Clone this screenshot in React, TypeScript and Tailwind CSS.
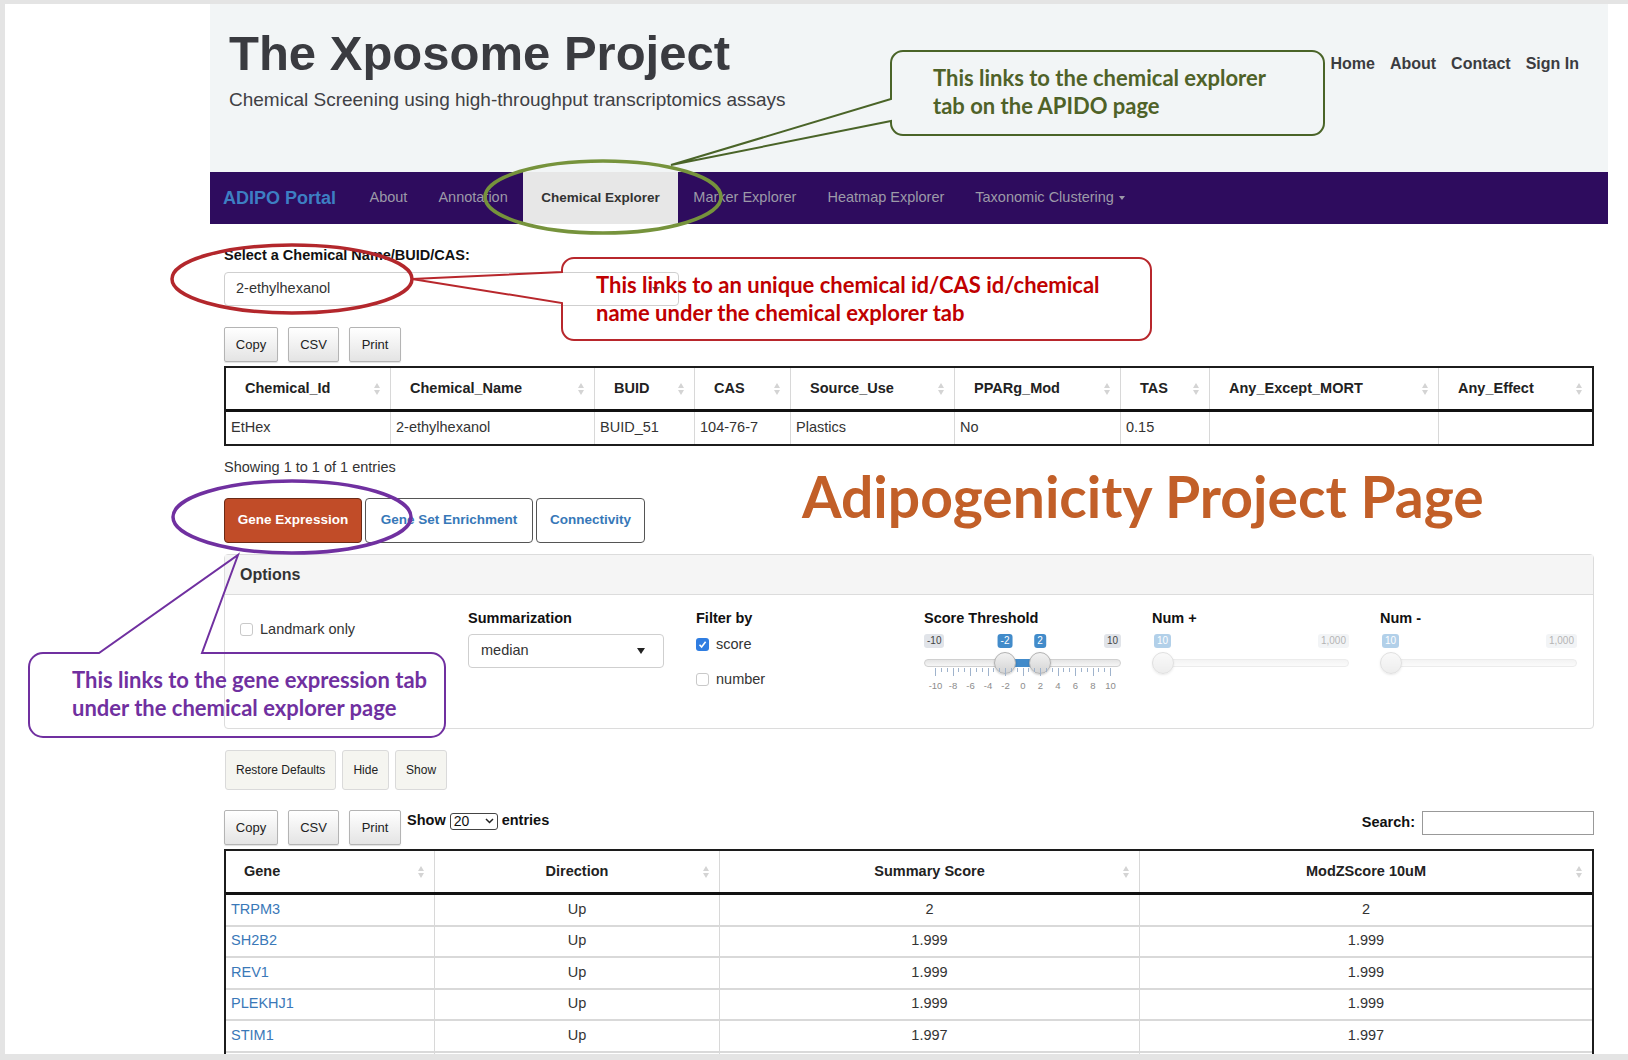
import React from "react";

const chemCols = [
  { name: "Chemical_Id", w: "EtHex" },
  { name: "Chemical_Name", w: "2-ethylhexanol" },
  { name: "BUID", w: "BUID_51" },
  { name: "CAS", w: "104-76-7" },
  { name: "Source_Use", w: "Plastics" },
  { name: "PPARg_Mod", w: "No" },
  { name: "TAS", w: "0.15" },
  { name: "Any_Except_MORT", w: "" },
  { name: "Any_Effect", w: "" },
];

const genes = [
  ["TRPM3", "Up", "2", "2"],
  ["SH2B2", "Up", "1.999", "1.999"],
  ["REV1", "Up", "1.999", "1.999"],
  ["PLEKHJ1", "Up", "1.999", "1.999"],
  ["STIM1", "Up", "1.997", "1.997"],
  ["", "", "", ""],
];

function SortIcon() {
  return (
    <span className="flex w-[8px] shrink-0 flex-col items-center gap-[2px]">
      <span className="h-0 w-0 border-x-[3.5px] border-b-[5px] border-x-transparent border-b-[#d4d4d4]" />
      <span className="h-0 w-0 border-x-[3.5px] border-t-[5px] border-x-transparent border-t-[#d4d4d4]" />
    </span>
  );
}

function GrayButton({ label, w }: { label: string; w: string }) {
  return (
    <button
      className={`flex h-[35px] ${w} items-center justify-center rounded-[2px] border border-[#b4b4b4] bg-gradient-to-b from-white to-[#e4e4e4] text-[13px] text-[#222] shadow-[0_1px_1px_rgba(0,0,0,0.12)]`}
    >
      {label}
    </button>
  );
}

function Checkbox({ checked }: { checked?: boolean }) {
  if (checked) {
    return (
      <span className="flex h-[13px] w-[13px] items-center justify-center rounded-[3px] bg-[#2f7de1]">
        <svg width="9" height="9" viewBox="0 0 9 9">
          <path d="M1.5 4.8 L3.6 7 L7.6 1.8" stroke="white" strokeWidth="1.6" fill="none" />
        </svg>
      </span>
    );
  }
  return <span className="h-[13px] w-[13px] rounded-[3px] border border-[#c9c9c9] bg-white" />;
}

function RangeSlider({
  min,
  max,
  from,
  to,
  grid,
  faded,
}: {
  min: string;
  max: string;
  from: number;
  to?: number;
  grid?: boolean;
  faded?: boolean;
}) {
  // handle positions in px within the 197px wide widget
  const toX = (v: number) => 11 + ((v + 10) / 20) * 175;
  const fromX = faded ? 11 : toX(from);
  const toXPos = to !== undefined ? toX(to) : null;
  const ticks = [-10, -8, -6, -4, -2, 0, 2, 4, 6, 8, 10];

  return (
    <div className={`relative mt-[6px] h-[62px] w-[197px] ${faded ? "opacity-40" : ""}`}>
      <span
        className={`absolute left-0 top-0 rounded-[3px] px-[3px] text-[10px] leading-[14px] ${
          faded ? "bg-[#428bca] text-white" : "bg-[#e1e4e9] text-[#444]"
        }`}
        style={faded ? { left: 2 } : undefined}
      >
        {faded ? from : min}
      </span>
      <span className="absolute right-0 top-0 rounded-[3px] bg-[#e1e4e9] px-[3px] text-[10px] leading-[14px] text-[#444]">
        {max}
      </span>
      {!faded && (
        <span
          className="absolute top-0 -translate-x-1/2 rounded-[3px] bg-[#428bca] px-[3px] text-[10px] leading-[14px] text-white"
          style={{ left: fromX }}
        >
          {from}
        </span>
      )}
      {toXPos !== null && (
        <span
          className="absolute top-0 -translate-x-1/2 rounded-[3px] bg-[#428bca] px-[3px] text-[10px] leading-[14px] text-white"
          style={{ left: toXPos }}
        >
          {to}
        </span>
      )}
      <div className="absolute left-0 right-0 top-[25px] h-[8px] rounded-full border border-[#d0d0d0] bg-gradient-to-b from-[#e4e4e4] to-[#f6f6f6]" />
      {toXPos !== null && (
        <div
          className="absolute top-[25px] h-[8px] bg-[#428bca]"
          style={{ left: fromX, width: toXPos - fromX }}
        />
      )}
      <span
        className="absolute top-[18px] h-[22px] w-[22px] -translate-x-1/2 rounded-full border border-[#b2b2b2] bg-gradient-to-b from-[#f2f2f2] to-[#d4d4d4] shadow-[0_1px_2px_rgba(0,0,0,0.2)]"
        style={{ left: fromX }}
      />
      {toXPos !== null && (
        <span
          className="absolute top-[18px] h-[22px] w-[22px] -translate-x-1/2 rounded-full border border-[#b2b2b2] bg-gradient-to-b from-[#f2f2f2] to-[#d4d4d4] shadow-[0_1px_2px_rgba(0,0,0,0.2)]"
          style={{ left: toXPos }}
        />
      )}
      {grid &&
        ticks.map((t, i) => (
          <React.Fragment key={t}>
            <span className="absolute top-[34px] h-[8px] w-px bg-[#9fb3cc]" style={{ left: toX(t) }} />
            {i < ticks.length - 1 && (
              <>
                <span className="absolute top-[34px] h-[4px] w-px bg-[#9fb3cc]" style={{ left: toX(t) + 5.8 }} />
                <span className="absolute top-[34px] h-[4px] w-px bg-[#9fb3cc]" style={{ left: toX(t) + 11.6 }} />
              </>
            )}
            <span
              className="absolute top-[46px] -translate-x-1/2 text-[9.5px] leading-[12px] text-[#8c8c8c]"
              style={{ left: toX(t) + 0.5 }}
            >
              {t}
            </span>
          </React.Fragment>
        ))}
    </div>
  );
}

function Annotations() {
  return (
    <>
      <svg
        className="pointer-events-none absolute left-0 top-0"
        width="1628"
        height="1060"
        viewBox="0 0 1628 1060"
        fill="none"
      >
        <ellipse cx="603" cy="197" rx="118" ry="36" stroke="#76933c" strokeWidth="3.5" />
        <path
          d="M 903 51 H 1312 A 12 12 0 0 1 1324 63 V 123 A 12 12 0 0 1 1312 135 H 903 A 12 12 0 0 1 891 123 V 121 L 671 165 L 891 99 V 63 A 12 12 0 0 1 903 51 Z"
          stroke="#4a6428"
          strokeWidth="2"
        />
        <ellipse cx="292" cy="279" rx="120" ry="34" stroke="#b3272c" strokeWidth="3.5" />
        <path
          d="M 574 258 H 1139 A 12 12 0 0 1 1151 270 V 328 A 12 12 0 0 1 1139 340 H 574 A 12 12 0 0 1 562 328 V 303 L 412 279 L 562 272 V 270 A 12 12 0 0 1 574 258 Z"
          stroke="#b8272c"
          strokeWidth="2"
        />
        <ellipse cx="292" cy="517" rx="119" ry="36" stroke="#7030a0" strokeWidth="3.5" />
        <path
          d="M 43 653 H 99 L 238 555 L 202 653 H 431 A 14 14 0 0 1 445 667 V 723 A 14 14 0 0 1 431 737 H 43 A 14 14 0 0 1 29 723 V 667 A 14 14 0 0 1 43 653 Z"
          stroke="#7030a0"
          strokeWidth="2"
        />
      </svg>
      <div className="pointer-events-none absolute left-[933px] top-[64px] text-[22px] font-bold leading-[28px] text-[#4f6228] [font-family:Lato,sans-serif]">
        <div>This links to the chemical explorer</div>
        <div>tab on the APIDO page</div>
      </div>
      <div className="pointer-events-none absolute left-[596px] top-[271px] text-[22px] font-bold leading-[28px] text-[#c00000] [font-family:Lato,sans-serif]">
        <div>This links to an unique chemical id/CAS id/chemical</div>
        <div>name under the chemical explorer tab</div>
      </div>
      <div className="pointer-events-none absolute left-[72px] top-[666px] text-[22px] font-bold leading-[28px] text-[#7030a0] [font-family:Lato,sans-serif]">
        <div>This links to the gene expression tab</div>
        <div>under the chemical explorer page</div>
      </div>
      <div className="pointer-events-none absolute left-[802px] top-[468px] text-[57px] font-bold leading-[57px] text-[#c25f28] [font-family:Lato,sans-serif]">
        Adipogenicity Project Page
      </div>
    </>
  );
}

export default function App() {
  return (
    <div className="relative h-[1060px] w-[1628px] overflow-hidden bg-[#e4e4e4] pb-[6px] pl-[5px] pt-[4px] text-[#333] [font-family:'Liberation_Sans',Arial,sans-serif]">
      <div className="h-full overflow-hidden bg-white">
        <div className="ml-[205px] w-[1398px]">
          {/* header */}
          <header className="flex h-[168px] bg-[#f2f5f6] pl-[19px] pr-[29px] pt-[22px]">
            <div className="flex-1">
              <h1 className="text-[49px] font-bold leading-[54px] text-[#3a3b40]">The Xposome Project</h1>
              <p className="mt-[8px] text-[19px] leading-[24px] text-[#3f4044]">
                Chemical Screening using high-throughput transcriptomics assays
              </p>
            </div>
            <div className="mt-[28px] flex gap-[15px] self-start text-[16px] font-bold leading-[20px] text-[#3b3c40]">
              <a>Home</a>
              <a>About</a>
              <a>Contact</a>
              <a>Sign In</a>
            </div>
          </header>

          {/* navbar */}
          <nav className="flex h-[52px] items-stretch bg-[#2e0c5e] text-[14.5px] text-[#9c9aa8]">
            <div className="flex w-[144px] items-center pl-[13px] text-[18px] font-bold text-[#3d7fc3]">
              ADIPO Portal
            </div>
            <a className="flex items-center px-[15.5px]">About</a>
            <a className="flex items-center px-[15.5px]">Annotation</a>
            <a className="flex items-center bg-[#e7e7e7] px-[18px] text-[13.5px] font-bold text-[#333]">
              Chemical Explorer
            </a>
            <a className="flex items-center px-[15.5px]">Marker Explorer</a>
            <a className="flex items-center px-[15.5px]">Heatmap Explorer</a>
            <a className="flex items-center gap-[5px] px-[15.5px]">
              Taxonomic Clustering
              <span className="h-0 w-0 border-x-[3.5px] border-t-[4px] border-x-transparent border-t-[#9c9aa8]" />
            </a>
          </nav>

          <div className="px-[14px] text-[14.5px]">
            <div className="mt-[21px] font-bold leading-[20px] text-[#111]">Select a Chemical Name/BUID/CAS:</div>
            <div className="mt-[7px] flex h-[34px] w-[455px] items-center justify-between rounded-[4px] border border-[#cfcfcf] pl-[11px] pr-[18px]">
              <span>2-ethylhexanol</span>
              <span className="h-0 w-0 border-x-[4px] border-t-[5px] border-x-transparent border-t-[#666]" />
            </div>

            <div className="mt-[21px] flex gap-[10px]">
              <GrayButton label="Copy" w="w-[54px]" />
              <GrayButton label="CSV" w="w-[51px]" />
              <GrayButton label="Print" w="w-[52px]" />
            </div>

            {/* chemical table */}
            <div className="mt-[4px] border-2 border-[#1c1c1c]">
              <div className="grid h-[44px] grid-cols-[165px_204px_100px_96px_164px_166px_89px_229px_153px] border-b-[3px] border-[#111] font-bold text-[#222]">
                {chemCols.map((c, i) => (
                  <div
                    key={c.name}
                    className={`flex items-center justify-between pl-[19px] pr-[9px] ${
                      i < chemCols.length - 1 ? "border-r border-[#d8d8d8]" : ""
                    }`}
                  >
                    <span>{c.name}</span>
                    <SortIcon />
                  </div>
                ))}
              </div>
              <div className="grid h-[32px] grid-cols-[165px_204px_100px_96px_164px_166px_89px_229px_153px]">
                {chemCols.map((c, i) => (
                  <div
                    key={c.name}
                    className={`flex items-center pl-[5px] ${i < chemCols.length - 1 ? "border-r border-[#d8d8d8]" : ""}`}
                  >
                    {c.w}
                  </div>
                ))}
              </div>
            </div>

            <div className="mt-[11px] leading-[20px]">Showing 1 to 1 of 1 entries</div>

            {/* tabs */}
            <div className="mt-[21px] flex gap-[3px] text-[13.5px] font-bold">
              <button className="h-[45px] w-[138px] rounded-[4px] border border-[#6b2a16] bg-[#c14c28] text-white">
                Gene Expression
              </button>
              <button className="h-[45px] w-[168px] rounded-[4px] border border-[#555] bg-white text-[#3778b8]">
                Gene Set Enrichment
              </button>
              <button className="h-[45px] w-[109px] rounded-[4px] border border-[#555] bg-white text-[#3778b8]">
                Connectivity
              </button>
            </div>

            {/* options panel */}
            <div className="mt-[11px] h-[175px] rounded-[4px] border border-[#dcdcdc]">
              <div className="flex h-[40px] items-center border-b border-[#dcdcdc] bg-[#f5f5f5] pl-[15px] text-[16px] font-bold text-[#333]">
                Options
              </div>
              <div className="grid grid-cols-6 pt-[13px]">
                <div className="px-[15px] pt-[11px]">
                  <label className="flex items-center gap-[7px] leading-[20px]">
                    <Checkbox />
                    Landmark only
                  </label>
                </div>
                <div className="px-[15px]">
                  <div className="font-bold leading-[20px] text-[#111]">Summarization</div>
                  <div className="mt-[6px] flex h-[34px] w-[196px] items-center justify-between rounded-[4px] border border-[#cfcfcf] pl-[12px] pr-[18px]">
                    <span>median</span>
                    <span className="h-0 w-0 border-x-[4.5px] border-t-[6px] border-x-transparent border-t-[#222]" />
                  </div>
                </div>
                <div className="px-[15px]">
                  <div className="font-bold leading-[20px] text-[#111]">Filter by</div>
                  <label className="mt-[6px] flex items-center gap-[7px] leading-[20px]">
                    <Checkbox checked />
                    score
                  </label>
                  <label className="mt-[15px] flex items-center gap-[7px] leading-[20px]">
                    <Checkbox />
                    number
                  </label>
                </div>
                <div className="px-[15px]">
                  <div className="font-bold leading-[20px] text-[#111]">Score Threshold</div>
                  <RangeSlider min="-10" max="10" from={-2} to={2} grid />
                </div>
                <div className="px-[15px]">
                  <div className="font-bold leading-[20px] text-[#111]">Num +</div>
                  <RangeSlider min="10" max="1,000" from={10} faded />
                </div>
                <div className="px-[15px]">
                  <div className="font-bold leading-[20px] text-[#111]">Num -</div>
                  <RangeSlider min="10" max="1,000" from={10} faded />
                </div>
              </div>
            </div>

            {/* restore / hide / show */}
            <div className="mt-[21px] flex gap-[6px] pl-[1px] text-[12px]">
              {["Restore Defaults", "Hide", "Show"].map((b) => (
                <button
                  key={b}
                  className="h-[40px] rounded-[3px] border border-[#dadada] bg-[#f5f5f0] px-[10px] text-[#222]"
                >
                  {b}
                </button>
              ))}
            </div>

            {/* gene table controls */}
            <div className="mt-[20px] flex items-start">
              <div className="flex gap-[10px]">
                <GrayButton label="Copy" w="w-[54px]" />
                <GrayButton label="CSV" w="w-[51px]" />
                <GrayButton label="Print" w="w-[52px]" />
              </div>
              <div className="ml-[6px] mt-[1px] flex h-[20px] items-center gap-[4px] font-bold text-[#111]">
                <span>Show</span>
                <span className="flex h-[17px] w-[48px] items-center justify-between rounded-[3px] border border-[#444] bg-white px-[3px] text-[14px] font-normal">
                  20
                  <svg width="9" height="6" viewBox="0 0 9 6">
                    <path d="M1 1 L4.5 4.5 L8 1" stroke="#222" strokeWidth="1.5" fill="none" />
                  </svg>
                </span>
                <span>entries</span>
              </div>
              <div className="ml-auto mt-[1px] flex items-center gap-[7px] font-bold text-[#111]">
                <span>Search:</span>
                <span className="h-[24px] w-[172px] border border-[#999] bg-white" />
              </div>
            </div>

            {/* gene table */}
            <div className="mt-[4px] border-x-2 border-t-2 border-[#1c1c1c]">
              <div className="grid h-[44px] grid-cols-[209px_285px_420px_452px] border-b-[3px] border-[#111] font-bold text-[#222]">
                <div className="flex items-center justify-between border-r border-[#d8d8d8] pl-[18px] pr-[9px]">
                  <span>Gene</span>
                  <SortIcon />
                </div>
                {["Direction", "Summary Score", "ModZScore 10uM"].map((h, i) => (
                  <div
                    key={h}
                    className={`flex items-center px-[9px] ${i < 2 ? "border-r border-[#d8d8d8]" : ""}`}
                  >
                    <span className="w-[8px]" />
                    <span className="flex-1 text-center">{h}</span>
                    <SortIcon />
                  </div>
                ))}
              </div>
              {genes.map((g, r) => (
                <div
                  key={r}
                  className="grid h-[31.5px] grid-cols-[209px_285px_420px_452px] border-b-2 border-[#d9d9d9]"
                >
                  <div className="flex items-center border-r border-[#d8d8d8] pl-[5px] text-[#3a78b8]">{g[0]}</div>
                  <div className="flex items-center justify-center border-r border-[#d8d8d8]">{g[1]}</div>
                  <div className="flex items-center justify-center border-r border-[#d8d8d8]">{g[2]}</div>
                  <div className="flex items-center justify-center">{g[3]}</div>
                </div>
              ))}
            </div>
          </div>
        </div>
      </div>
      <Annotations />
    </div>
  );
}
